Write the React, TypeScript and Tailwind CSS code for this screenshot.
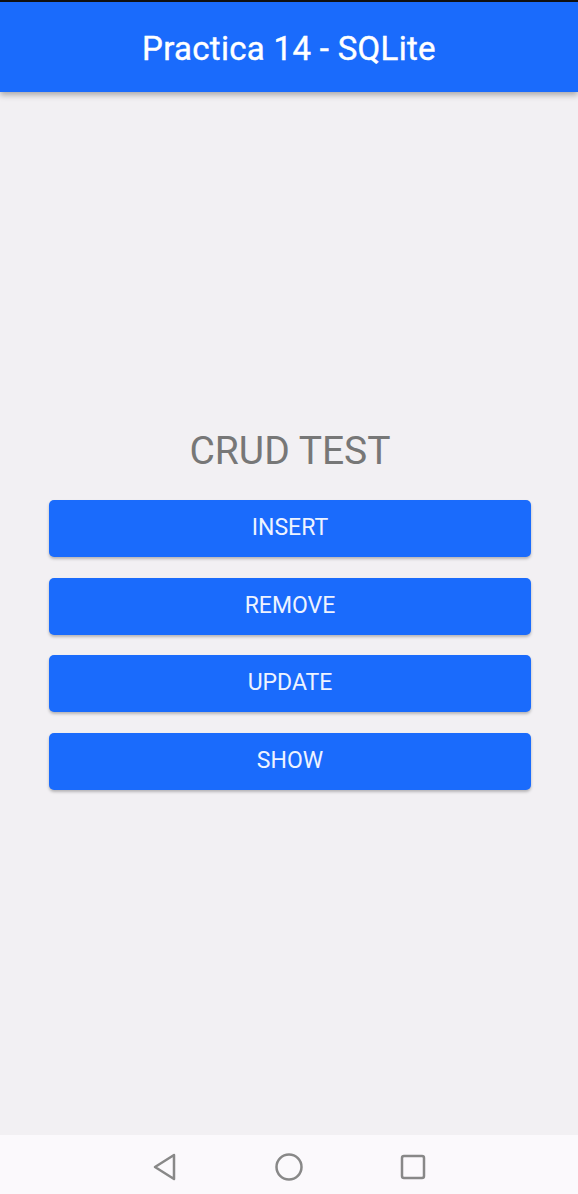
const actions = ['INSERT', 'REMOVE', 'UPDATE', 'SHOW'];

export default function App() {
  return (
    <div className="flex h-screen flex-col bg-[#f2f0f3] font-['Roboto',sans-serif]">
      <div className="h-[2px] bg-[#111]" />
      <header className="z-10 flex h-[90px] items-center justify-center bg-[#1a6bfc] pt-[3px] shadow-[0_3px_6px_rgba(0,0,0,0.3)]">
        <h1 className="text-[33px] font-normal tracking-[0.3px] text-white [-webkit-text-stroke:0.4px_white]">Practica 14 - SQLite</h1>
      </header>
      <main className="flex flex-1 flex-col items-center pt-[336px] pl-[49px] pr-[47px]">
        <h2 className="mb-[26px] text-[39px] leading-[46px] text-[#777]">CRUD TEST</h2>
        <div className="flex w-full flex-col gap-[20.5px]">
          {actions.map((a) => (
            <button
              key={a}
              className="h-[57px] w-full rounded-[5px] bg-[#1a6bfc] text-[23px] text-[#eef3ff] shadow-[0_2px_3px_rgba(0,0,0,0.25)]"
            >
              {a}
            </button>
          ))}
        </div>
      </main>
      <nav className="flex h-[59px] items-center justify-center gap-[97px] bg-[#fbf9fc] pt-[5px]">
        <svg width="26" height="28" viewBox="0 0 26 28" fill="none" stroke="#888" strokeWidth="2.5" strokeLinejoin="round">
          <path d="M22 2 L3 14 L22 26 Z" />
        </svg>
        <svg width="28" height="28" viewBox="0 0 28 28" fill="none" stroke="#888" strokeWidth="2.5">
          <circle cx="14" cy="14" r="12.5" />
        </svg>
        <svg width="26" height="26" viewBox="0 0 26 26" fill="none" stroke="#888" strokeWidth="2.5">
          <rect x="2" y="2" width="22" height="22" rx="2" />
        </svg>
      </nav>
    </div>
  );
}
